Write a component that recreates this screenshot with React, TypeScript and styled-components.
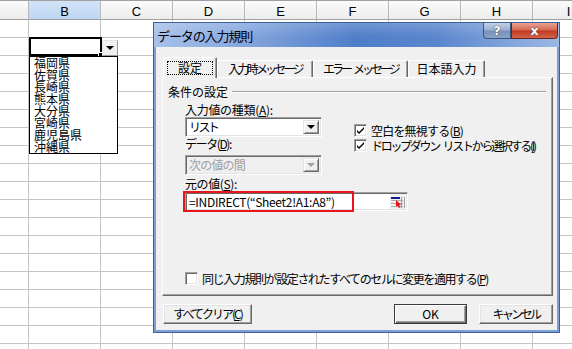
import React from 'react';
import styled, { createGlobalStyle } from 'styled-components';

const jp = `"Noto Sans CJK JP", "Liberation Sans", sans-serif`;

const GlobalStyle = createGlobalStyle`
  html, body { margin: 0; padding: 0; background: #fff; overflow: hidden; }
  body { font-family: ${jp}; color: #000; }
`;

const Screen = styled.div`
  position: relative;
  width: 572px;
  height: 349px;
  overflow: hidden;
  background: #fff;
`;

const Sheet = styled.div`
  display: grid;
  width: max-content;
  grid-template-columns: 29px repeat(8, 72px);
  grid-template-rows: 20px repeat(19, 18px);
`;

const ColHead = styled.div<{ $sel?: boolean }>`
  box-sizing: border-box;
  border-top: 1px solid #a0a0a0;
  border-right: 1px solid #b8b8b8;
  border-bottom: 1px solid #a0a0a0;
  background: ${(p) => (p.$sel ? 'linear-gradient(#d3e4f8, #bdd6f3)' : 'linear-gradient(#fbfbfb, #ececec)')};
  font: 13px "Liberation Sans", Arial, sans-serif;
  display: flex;
  align-items: center;
  justify-content: center;
  padding-top: 2px;
`;

const Cell = styled.div`
  box-sizing: border-box;
  border-right: 1px solid #c4c4c4;
  border-bottom: 1px solid #c4c4c4;
`;

const ActiveCell = styled.div`
  position: absolute;
  left: 29px;
  top: 37px;
  width: 73px;
  height: 19px;
  box-sizing: border-box;
  border: 2px solid #000;
  &::after {
    content: '';
    position: absolute;
    right: -3px;
    bottom: -3px;
    width: 3px;
    height: 3px;
    background: #000;
    border: 1px solid #fff;
  }
`;

const CellDropButton = styled.div`
  position: absolute;
  left: 102px;
  top: 40px;
  width: 16px;
  height: 16px;
  box-sizing: border-box;
  background: #f0f0f0;
  border: 1px solid;
  border-color: #e3e3e3 #9a9a9a #9a9a9a #e3e3e3;
  display: flex;
  align-items: center;
  justify-content: center;
`;

const Arrow = styled.div<{ $off?: boolean }>`
  width: 0;
  height: 0;
  border-left: 4px solid transparent;
  border-right: 4px solid transparent;
  border-top: 4px solid ${(p) => (p.$off ? '#a0a0a0' : '#000')};
`;

const DropList = styled.ul`
  position: absolute;
  left: 29px;
  top: 56px;
  width: 89px;
  height: 98px;
  box-sizing: border-box;
  margin: 0;
  padding: 0 0 0 4px;
  list-style: none;
  background: #fff;
  border: 1px solid #000;
  font: 12px/12px ${jp};
`;

const Dialog = styled.div`
  position: absolute;
  left: 153px;
  top: 22px;
  width: 407px;
  height: 311px;
  box-sizing: border-box;
  border: 1px solid #3e6198;
  background: #7d9fd5;
  padding: 0 2px 2px;
  display: flex;
  flex-direction: column;
`;

const TitleBar = styled.div`
  flex: none;
  height: 24px;
  margin: 0 -2px;
  display: flex;
  align-items: flex-start;
  background:
    linear-gradient(rgba(255, 255, 255, 0.18), rgba(255, 255, 255, 0) 60%),
    linear-gradient(to right, #a6c0e9 0%, #86a7de 22%, #4f7dc8 50%, #5a86cd 70%, #86a8de 90%, #9bb7e4 100%);
`;

const Title = styled.span`
  padding: 5px 0 0 3px;
  font: 13px/15px ${jp};
  letter-spacing: -1.1px;
`;

const CaptionButton = styled.div<{ $close?: boolean }>`
  width: ${(p) => (p.$close ? 47 : 28)}px;
  height: 16px;
  box-sizing: border-box;
  border: 1px solid ${(p) => (p.$close ? '#6b2318' : '#3d5576')};
  border-top: none;
  border-radius: ${(p) => (p.$close ? '0 0 4px 0' : '0 0 0 4px')};
  background: ${(p) =>
    p.$close
      ? 'linear-gradient(#e6a394, #d66a53 45%, #c23b22 55%, #d0644b)'
      : 'linear-gradient(#c3d1e6, #9cb2d2 45%, #7892b8 55%, #8aa3c7)'};
  display: flex;
  align-items: center;
  justify-content: center;
  margin-left: ${(p) => (p.$close ? 0 : 'auto')};
  margin-right: ${(p) => (p.$close ? '1px' : 0)};
  color: #fff;
  font: bold 13px/13px "DejaVu Sans", sans-serif;
  text-shadow: 0 0 1px #333, 0 0 1px #333;
`;

const Client = styled.div`
  flex: 1;
  background: #f0f0f0;
  padding: 10px 4px 6px 6px;
  display: flex;
  flex-direction: column;
  font: 12px/14px ${jp};
`;

// text run whose tracking is tightened to the narrow dialog font
const Txt = styled.span<{ $ls?: number }>`
  letter-spacing: ${(p) => p.$ls ?? 0}px;
  white-space: nowrap;
`;

const TabStrip = styled.div`
  height: 20px;
  flex: none;
  display: flex;
  align-items: flex-start;
  padding-left: 1px;
  position: relative;
  z-index: 1;
`;

const Tab = styled.div<{ $active?: boolean; $w: number }>`
  width: ${(p) => p.$w}px;
  height: ${(p) => (p.$active ? 21 : 17)}px;
  margin-top: ${(p) => (p.$active ? 0 : 3)}px;
  box-sizing: border-box;
  background: #f0f0f0;
  border-top: 1px solid #fff;
  border-left: 1px solid #fff;
  border-right: 1px solid #696969;
  box-shadow: inset -1px 0 0 #a0a0a0;
  border-radius: 2px 2px 0 0;
  display: flex;
  align-items: center;
  justify-content: center;
  white-space: nowrap;
`;

const FocusRing = styled.span`
  border: 1px dotted #000;
  padding: 0 10px;
  line-height: 12px;
  margin-top: -1px;
`;

const Panel = styled.div`
  height: 219px;
  flex: none;
  box-sizing: border-box;
  border-top: 1px solid #fff;
  border-left: 1px solid #fff;
  border-right: 1px solid #696969;
  border-bottom: 1px solid #696969;
  box-shadow: inset -1px -1px 0 #a0a0a0;
  padding: 7px 6px 9px 5px;
  display: flex;
  flex-direction: column;
`;

const GroupHeader = styled.div`
  display: flex;
  align-items: center;
  &::after {
    content: '';
    flex: 1;
    margin-left: 4px;
    border-top: 1px solid #a0a0a0;
    border-bottom: 1px solid #fff;
  }
`;

const GroupBody = styled.div`
  margin: 4px 0 0 17px;
  display: flex;
  flex-direction: column;
`;

const TopRow = styled.div`
  display: flex;
`;

const LeftCol = styled.div`
  width: 137px;
  display: flex;
  flex-direction: column;
`;

const RightCol = styled.div`
  margin-left: 32px;
  padding-top: 20px;
  display: flex;
  flex-direction: column;
`;

const FieldLabel = styled.div<{ $gap?: number; $ls?: number }>`
  margin-top: ${(p) => p.$gap ?? 0}px;
  letter-spacing: ${(p) => p.$ls ?? 0}px;
  white-space: nowrap;
`;

const Sunken = styled.div<{ $off?: boolean; $w: number; $h: number; $gap?: number }>`
  position: relative;
  width: ${(p) => p.$w}px;
  height: ${(p) => p.$h}px;
  margin-top: ${(p) => p.$gap ?? 0}px;
  box-sizing: border-box;
  border: 1px solid;
  border-color: #a0a0a0 #fff #fff #a0a0a0;
  box-shadow: inset 1px 1px 0 #696969, inset -1px -1px 0 #e3e3e3;
  background: ${(p) => (p.$off ? '#f0f0f0' : '#fff')};
  color: ${(p) => (p.$off ? '#a0a0a0' : '#000')};
  display: flex;
  align-items: center;
  padding: 2px 2px 2px 3px;
  white-space: nowrap;
`;

const FieldText = styled.span<{ $ls?: number }>`
  flex: 1;
  letter-spacing: ${(p) => p.$ls ?? 0}px;
`;

const DropButton = styled.div`
  width: 16px;
  height: 100%;
  box-sizing: border-box;
  background: #f0f0f0;
  border: 1px solid;
  border-color: #e3e3e3 #696969 #696969 #e3e3e3;
  box-shadow: inset 1px 1px 0 #fff, inset -1px -1px 0 #a0a0a0;
  display: flex;
  align-items: center;
  justify-content: center;
`;

const Highlight = styled.div`
  position: absolute;
  left: -3px;
  top: -2px;
  width: 171px;
  height: 21px;
  box-sizing: border-box;
  border: 2px solid #e8151b;
`;

const CheckRow = styled.label<{ $indent?: number }>`
  display: flex;
  align-items: center;
  gap: 4px;
  height: 15px;
  margin-left: ${(p) => p.$indent ?? 0}px;
  white-space: nowrap;
`;

const CheckBox = styled.span`
  width: 13px;
  height: 13px;
  flex: none;
  box-sizing: border-box;
  border: 1px solid;
  border-color: #a0a0a0 #fff #fff #a0a0a0;
  box-shadow: inset 1px 1px 0 #696969, inset -1px -1px 0 #e3e3e3;
  background: #fff;
  display: flex;
  align-items: center;
  justify-content: center;
`;

const BottomRow = styled.div`
  margin-top: auto;
`;

const ButtonRow = styled.div`
  margin-top: 8px;
  display: flex;
  height: 20px;
`;

const Button = styled.div<{ $w: number; $default?: boolean; $gap?: number }>`
  width: ${(p) => p.$w}px;
  height: 20px;
  margin-left: ${(p) => p.$gap ?? 0}px;
  box-sizing: border-box;
  background: #f0f0f0;
  border: 1px solid;
  border-color: ${(p) => (p.$default ? '#3a3a3a' : '#fff #696969 #696969 #fff')};
  box-shadow: ${(p) =>
    p.$default
      ? 'inset 1px 1px 0 #fff, inset -1px -1px 0 #696969, inset -2px -2px 0 #a0a0a0'
      : 'inset -1px -1px 0 #a0a0a0, inset 1px 1px 0 #e3e3e3'};
  display: flex;
  align-items: center;
  justify-content: center;
  white-space: nowrap;
`;

const Spacer = styled.div`
  flex: 1;
`;

const Check = () => (
  <svg width="9" height="9" viewBox="0 0 9 9">
    <path d="M1 4 L3 6 L8 1 L8 3 L3 8 L1 6 Z" fill="#000" />
  </svg>
);

const RefEditIcon = () => (
  <svg width="15" height="15" viewBox="0 0 15 15" style={{ flex: 'none' }}>
    <rect x="0" y="0" width="15" height="15" fill="#f0f0f0" />
    <rect x="1" y="3" width="9" height="2" fill="#0a1e8c" />
    <rect x="1" y="6" width="12" height="1" fill="#b0b0b0" />
    <rect x="1" y="9" width="12" height="1" fill="#b0b0b0" />
    <rect x="1" y="12" width="12" height="1" fill="#b0b0b0" />
    <rect x="11" y="3" width="1" height="11" fill="#9a9a9a" />
    <rect x="14" y="3" width="1" height="11" fill="#9a9a9a" />
    <path d="M6 6 L6 13 L7.6 11.6 L9 14 L10.4 13.3 L9.1 11 L11.2 11 Z" fill="#e0141a" />
  </svg>
);

const columns = ['', 'B', 'C', 'D', 'E', 'F', 'G', 'H', 'I'];
const prefectures = ['福岡県', '佐賀県', '長崎県', '熊本県', '大分県', '宮崎県', '鹿児島県', '沖縄県'];

export default function App() {
  return (
    <>
      <GlobalStyle />
      <Screen>
        <Sheet>
          {columns.map((c) => (
            <ColHead key={'h' + c} $sel={c === 'B'}>
              {c}
            </ColHead>
          ))}
          {Array.from({ length: 19 * columns.length }, (_, i) => (
            <Cell key={i} />
          ))}
        </Sheet>

        <ActiveCell />
        <CellDropButton>
          <Arrow />
        </CellDropButton>
        <DropList>
          {prefectures.map((p) => (
            <li key={p}>{p}</li>
          ))}
        </DropList>

        <Dialog>
          <TitleBar>
            <Title>データの入力規則</Title>
            <CaptionButton>?</CaptionButton>
            <CaptionButton $close>x</CaptionButton>
          </TitleBar>
          <Client>
            <TabStrip>
              <Tab $active $w={54}>
                <FocusRing>設定</FocusRing>
              </Tab>
              <Tab $w={96}>
                <Txt $ls={-2.8}>入力時メッセージ</Txt>
              </Tab>
              <Tab $w={95}>
                <Txt $ls={-3}>{'エラー\u2002メッセージ'}</Txt>
              </Tab>
              <Tab $w={77}>日本語入力</Tab>
            </TabStrip>
            <Panel>
              <GroupHeader>条件の設定</GroupHeader>
              <GroupBody>
                <TopRow>
                  <LeftCol>
                    <FieldLabel $ls={-0.3}>
                      入力値の種類(<u>A</u>):
                    </FieldLabel>
                    <Sunken $w={137} $h={20}>
                      <FieldText $ls={-2.6}>リスト</FieldText>
                      <DropButton>
                        <Arrow />
                      </DropButton>
                    </Sunken>
                    <FieldLabel $ls={-1.4}>
                      データ(<u>D</u>):
                    </FieldLabel>
                    <Sunken $w={137} $h={20} $gap={4} $off>
                      <FieldText $ls={-0.8}>次の値の間</FieldText>
                      <DropButton>
                        <Arrow $off />
                      </DropButton>
                    </Sunken>
                  </LeftCol>
                  <RightCol>
                    <CheckRow>
                      <CheckBox>
                        <Check />
                      </CheckBox>
                      <Txt $ls={-0.8}>
                        空白を無視する(<u>B</u>)
                      </Txt>
                    </CheckRow>
                    <CheckRow>
                      <CheckBox>
                        <Check />
                      </CheckBox>
                      <Txt $ls={-2.3}>
                        {'ドロップダウン\u2002リストから選択する('}
                        <u>I</u>)
                      </Txt>
                    </CheckRow>
                  </RightCol>
                </TopRow>
                <FieldLabel $gap={2} $ls={-0.4}>
                  元の値(<u>S</u>):
                </FieldLabel>
                <Sunken $w={223} $h={19} $gap={1}>
                  <FieldText $ls={-0.3}>=INDIRECT(“Sheet2!A1:A8”)</FieldText>
                  <RefEditIcon />
                  <Highlight />
                </Sunken>
              </GroupBody>
              <BottomRow>
                <CheckRow $indent={17}>
                  <CheckBox />
                  <Txt $ls={-1.4}>
                    同じ入力規則が設定されたすべてのセルに変更を適用する(<u>P</u>)
                  </Txt>
                </CheckRow>
              </BottomRow>
            </Panel>
            <ButtonRow>
              <Button $w={89} $gap={1}>
                <Txt $ls={-2}>
                  すべてクリア(<u>C</u>)
                </Txt>
              </Button>
              <Spacer />
              <Button $w={73} $default>
                OK
              </Button>
              <Button $w={74} $gap={12}>
                <Txt $ls={-2.6}>キャンセル</Txt>
              </Button>
            </ButtonRow>
          </Client>
        </Dialog>
      </Screen>
    </>
  );
}
